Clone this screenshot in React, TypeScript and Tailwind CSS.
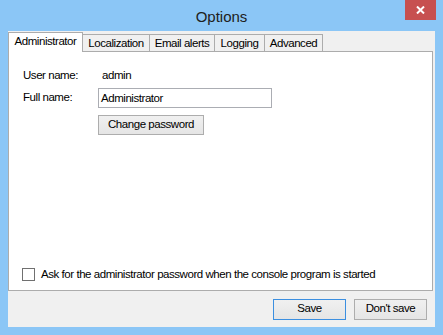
const tabs = [
  { label: "Administrator", width: "w-[75px]", active: true },
  { label: "Localization", width: "w-[67px]" },
  { label: "Email alerts", width: "w-[65px]" },
  { label: "Logging", width: "w-[50px]" },
  { label: "Advanced", width: "w-[58px]" },
];

function WinButton({ label, primary }: { label: string; primary?: boolean }) {
  return (
    <button
      className={
        "h-[21px] w-[73px] bg-gradient-to-b from-[#f0f0f0] to-[#e5e5e5] text-black border " +
        (primary ? "border-[#3c8fe0]" : "border-[#adadad]")
      }
    >
      {label}
    </button>
  );
}

export default function App() {
  return (
    <div
      className="w-[443px] h-[335px] bg-[#8bc6f6] flex flex-col text-black text-[11.5px] tracking-[-0.45px]"
      style={{ fontFamily: '"Liberation Sans", Arial, sans-serif' }}
    >
      {/* TITLE BAR */}
      <div className="h-[31px] grid grid-cols-[1fr_auto_1fr]">
        <div />
        <div className="text-[15px] tracking-normal leading-[31px] text-[#202020] pt-px">Options</div>
        <div className="flex justify-end items-start pr-[7px]">
          <div className="w-[31px] h-[20px] bg-[#c75050] flex items-center justify-center">
            <svg width="9" height="8" viewBox="0 0 9 8">
              <path d="M1 0.5 L8 7.5 M8 0.5 L1 7.5" stroke="#fff" strokeWidth="2" />
            </svg>
          </div>
        </div>
      </div>

      {/* CLIENT */}
      <div className="flex-1 mx-[8px] mb-[8px] bg-[#f0f0f0] flex flex-col">
        {/* TABS */}
        <div className="h-[20px] flex items-end">
          {tabs.map((t) =>
            t.active ? (
              <div
                key={t.label}
                className={`${t.width} h-[20px] -mb-px bg-white border border-b-0 border-[#acacac] leading-[17px] text-center relative z-10`}
              >
                {t.label}
              </div>
            ) : (
              <div
                key={t.label}
                className={`${t.width} h-[17px] bg-[#f0f0f0] border border-l-0 border-b-0 border-[#acacac] leading-[16px] text-center`}
              >
                {t.label}
              </div>
            )
          )}
        </div>

        {/* PANEL */}
        <div className="w-[425px] h-[240px] bg-white border border-[#acacac] flex flex-col pl-[14px] pt-[16px]">
          <div className="flex items-center h-[15px]">
            <span className="w-[77px]">User name:</span>
            <span className="ml-[2px]">admin</span>
          </div>
          <div className="flex items-center mt-[5px]">
            <span className="w-[75px]">Full name:</span>
            <div className="w-[174px] h-[20px] border border-[#abadb3] px-[2px] leading-[18px]">
              Administrator
            </div>
          </div>
          <div className="ml-[75px] mt-[7px]">
            <button className="h-[20px] w-[106px] bg-gradient-to-b from-[#f0f0f0] to-[#e5e5e5] border border-[#adadad]">
              Change password
            </button>
          </div>

          <div className="flex-1" />

          {/* OPTION */}
          <div className="flex items-center gap-[6px] mb-[7px] -ml-px">
            <div className="w-[13px] h-[13px] border border-[#707070] bg-white" />
            <span>Ask for the administrator password when the console program is started</span>
          </div>
        </div>

        {/* FOOTER */}
        <div className="flex-1 flex items-center justify-end gap-[8px] pr-[8px]">
          <WinButton label="Save" primary />
          <WinButton label="Don't save" />
        </div>
      </div>
    </div>
  );
}
